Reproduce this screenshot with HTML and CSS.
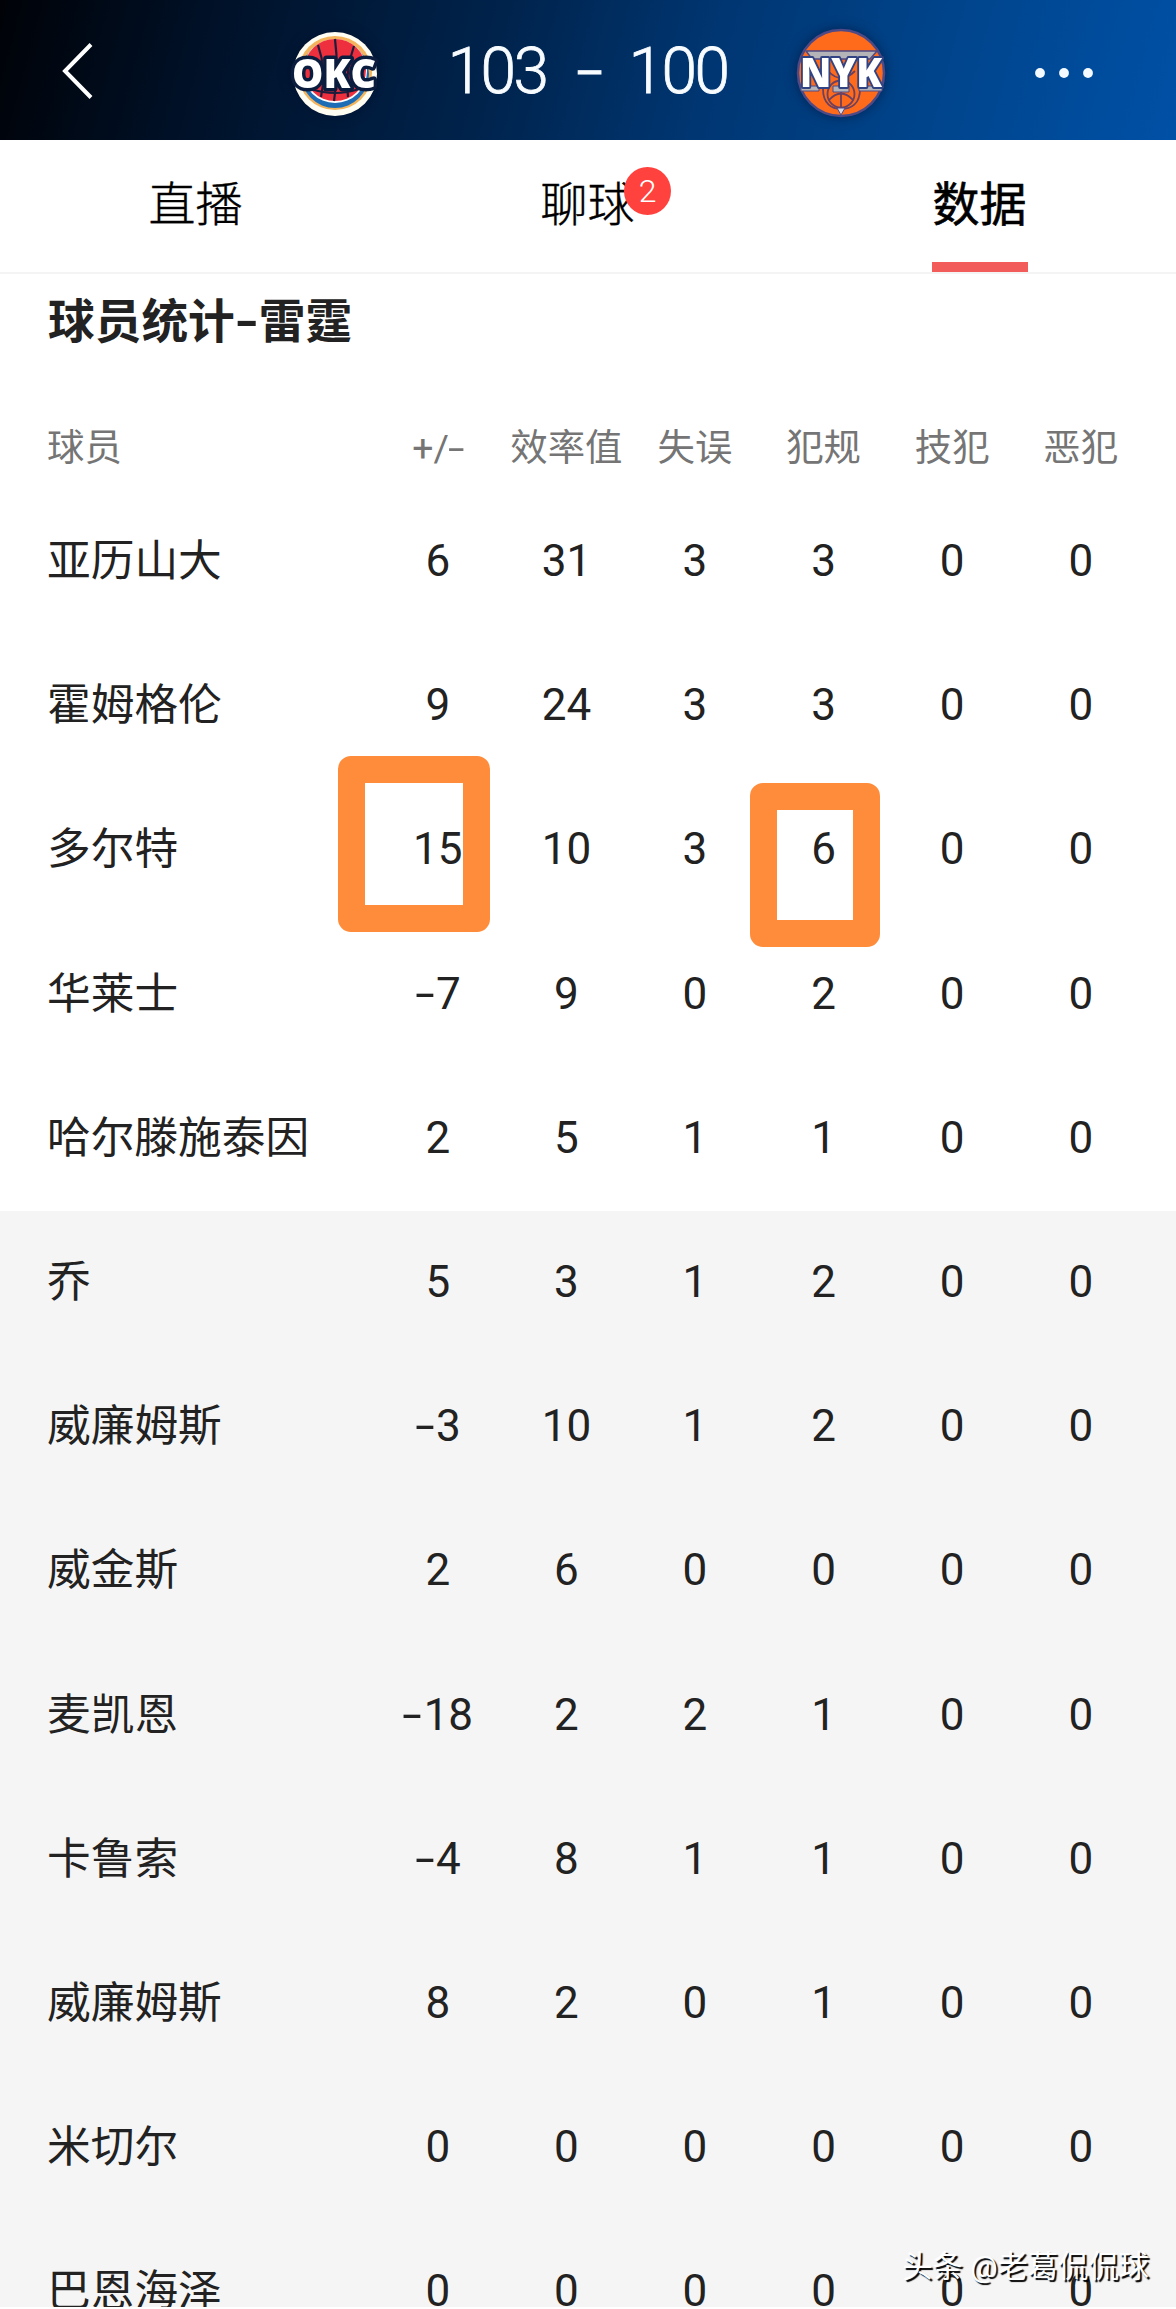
FILE: index.html
```html
<!DOCTYPE html>
<html lang="zh-CN">
<head>
    <meta charset="UTF-8">
    <meta name="viewport" content="width=device-width, initial-scale=1.0">
    <title>球员统计</title>
    <link rel="stylesheet" href="styles.css">
</head>
<body>
    <div class="page">
        <header class="topbar">
            <svg class="back" viewBox="0 0 34 60">
                <path d="M31 1.5 L5 28 L31 54.5" fill="none" stroke="#fff" stroke-width="4"/>
            </svg>

            <div class="match">
                <!-- OKC -->
                <svg class="logo" viewBox="0 0 92 92">
                    <circle cx="46" cy="47" r="42" fill="#fffdf2"/>
                    <circle cx="46" cy="46" r="37" fill="#f3b45c"/>
                    <circle cx="46" cy="47" r="34" fill="#1c6db5"/>
                    <circle cx="46" cy="44" r="32" fill="#fff"/>
                    <circle cx="46" cy="43" r="31" fill="#ee2f3d"/>
                    <path d="M46 12 Q50 43 45 74 M29 18 Q38 44 32 70 M65 19 Q56 44 59 70 M22 62 Q46 70 70 62" fill="none" stroke="#1b1d3c" stroke-width="2.2"/>
                    <text class="logo-text" x="45" y="61" textLength="84" lengthAdjust="spacingAndGlyphs" stroke="#0b1d3f" stroke-width="7">OKC</text>
                </svg>
                <div class="score">
                    <span>103</span>
                    <span class="dash">-</span>
                    <span>100</span>
                </div>
                <!-- NYK -->
                <svg class="logo" viewBox="0 0 92 92">
                    <circle cx="46" cy="46" r="43" fill="#ff6b1a" stroke="#4f4a86" stroke-width="2.5"/>
                    <path d="M11 24 H82 L75 32 H17 Z" fill="#b4b4b8" stroke="#4f4a86" stroke-width="1.5"/>
                    <path d="M28 62 C28 77 37 82 46 82 C56 82 65 77 65 62" fill="none" stroke="#6b4060" stroke-width="1.8"/>
                    <circle cx="46" cy="67" r="13.5" fill="none" stroke="#6b4060" stroke-width="1.8"/>
                    <path d="M46 54 V81 M34 73 Q46 60 58 73 M33 44 Q46 58 60 44" fill="none" stroke="#6b4060" stroke-width="1.8"/>
                    <path d="M6 59 H24 V64 H6 Z M38 59 H54 V65 H38 Z M64 59 H87 V64 H64 Z" fill="#b4b4b8" stroke="#4f4a86"/>
                    <path d="M42 81 H50 L46 88 Z" fill="#d8d8e4" stroke="#4f4a86"/>
                    <text class="logo-text" x="46" y="60" textLength="82" lengthAdjust="spacingAndGlyphs" stroke="#324383" stroke-width="4">NYK</text>
                </svg>
            </div>

            <svg class="more" viewBox="0 0 60 12">
                <circle cx="6" cy="6" r="4.9"/>
                <circle cx="30" cy="6" r="4.9"/>
                <circle cx="54" cy="6" r="4.9"/>
            </svg>
        </header>

        <nav class="tabs">
            <a class="tab">直播</a>
            <a class="tab">聊球<span class="badge">2</span></a>
            <a class="tab active">数据</a>
        </nav>

        <h1>球员统计<span class="title-dash">-</span>雷霆</h1>

        <table>
            <thead>
                <tr><th>球员</th><th>+/<span class="minus">-</span></th><th>效率值</th><th>失误</th><th>犯规</th><th>技犯</th><th>恶犯</th></tr>
            </thead>
            <tbody>
                <tr><th>亚历山大</th><td>6</td><td>31</td><td>3</td><td>3</td><td>0</td><td>0</td></tr>
                <tr><th>霍姆格伦</th><td>9</td><td>24</td><td>3</td><td>3</td><td>0</td><td>0</td></tr>
                <tr><th>多尔特</th><td>15<i class="mark mark-plus"></i></td><td>10</td><td>3</td><td>6<i class="mark mark-foul"></i></td><td>0</td><td>0</td></tr>
                <tr><th>华莱士</th><td><span class="minus">-</span>7</td><td>9</td><td>0</td><td>2</td><td>0</td><td>0</td></tr>
                <tr><th>哈尔滕施泰因</th><td>2</td><td>5</td><td>1</td><td>1</td><td>0</td><td>0</td></tr>
            </tbody>
            <!-- bench -->
            <tbody class="bench">
                <tr><th>乔</th><td>5</td><td>3</td><td>1</td><td>2</td><td>0</td><td>0</td></tr>
                <tr><th>威廉姆斯</th><td><span class="minus">-</span>3</td><td>10</td><td>1</td><td>2</td><td>0</td><td>0</td></tr>
                <tr><th>威金斯</th><td>2</td><td>6</td><td>0</td><td>0</td><td>0</td><td>0</td></tr>
                <tr><th>麦凯恩</th><td><span class="minus">-</span>18</td><td>2</td><td>2</td><td>1</td><td>0</td><td>0</td></tr>
                <tr><th>卡鲁索</th><td><span class="minus">-</span>4</td><td>8</td><td>1</td><td>1</td><td>0</td><td>0</td></tr>
                <tr><th>威廉姆斯</th><td>8</td><td>2</td><td>0</td><td>1</td><td>0</td><td>0</td></tr>
                <tr><th>米切尔</th><td>0</td><td>0</td><td>0</td><td>0</td><td>0</td><td>0</td></tr>
                <tr><th>巴恩海泽</th><td>0</td><td>0</td><td>0</td><td>0</td><td>0</td><td>0</td></tr>
            </tbody>
        </table>

        <div class="watermark">头条 @老葛侃侃球</div>
    </div>
</body>
</html>
```

FILE: styles.css
```css
* {
    box-sizing: border-box;
}
body {
    margin: 0;
    background: #fff;
    font-family: Roboto, "Noto Sans CJK SC", sans-serif;
    color: #222;
}
.page {
    position: relative;
    height: 2307px;
    overflow: hidden;
}
.topbar {
    display: flex;
    align-items: center;
    justify-content: space-between;
    height: 140px;
    padding: 6px 82px 0 60px;
    background: linear-gradient(105deg, #000207 0%, #001128 18%, #00234c 42%, #003672 60%, #00458d 80%, #0050a6 100%);
}
.back {
    width: 34px;
    height: 60px;
}
.match {
    display: flex;
    align-items: center;
    justify-content: space-between;
    width: 598px;
    margin-left: 47px;
}
.logo {
    width: 92px;
    height: 92px;
    overflow: visible;
    filter: drop-shadow(0 0 6px rgba(0, 10, 40, 0.5));
}
.logo-text {
    font-family: "Open Sans", sans-serif;
    font-size: 40px;
    font-weight: 800;
    fill: #fff;
    text-anchor: middle;
    paint-order: stroke;
    stroke-linejoin: round;
}
.score {
    display: flex;
    align-items: center;
    justify-content: space-between;
    width: 280px;
    font-size: 64px;
    font-weight: 300;
    line-height: 74px;
    padding-bottom: 2px;
    letter-spacing: -2.5px;
    color: #f8fcff;
    -webkit-text-stroke: 0.8px #f8fcff;
}
.dash {
    transform: scaleX(1.5);
}
.more {
    width: 60px;
    height: 12px;
    fill: #f4faff;
}
.tabs {
    display: flex;
    height: 134px;
    border-bottom: 2px solid #f4f4f4;
}
.tab {
    position: relative;
    flex: 1;
    padding-right: 1px;
    font-size: 47px;
    font-weight: 300;
    line-height: 130px;
    text-align: center;
    color: #000;
    -webkit-text-stroke: 0.4px #000;
}
.tab.active {
    font-weight: 400;
    -webkit-text-stroke: 0.6px #000;
}
.tab.active::after {
    content: "";
    position: absolute;
    left: 148px;
    bottom: 0;
    width: 96px;
    height: 10px;
    background: #f25c5a;
}
.badge {
    position: absolute;
    left: 232px;
    top: 27px;
    width: 47px;
    height: 48px;
    border-radius: 50%;
    background: #ff423d;
    color: #fff;
    font-size: 32px;
    font-weight: 300;
    line-height: 48px;
    -webkit-text-stroke: 0;
}
h1 {
    margin: 0;
    padding-left: 48px;
    height: 109px;
    font-size: 46.7px;
    font-weight: 700;
    line-height: 97px;
}
.title-dash {
    display: inline-block;
    width: 24px;
    text-align: center;
    transform: scaleX(1.4);
}
table, thead, tbody {
    display: block;
}
tr {
    display: grid;
    grid-template-columns: 326.5px repeat(6, 128.6px);
    height: 144.2px;
    padding-left: 47px;
    line-height: 143px;
}
th, td {
    position: relative;
    padding: 0;
    font-size: 44px;
    font-weight: 400;
    text-align: center;
    white-space: nowrap;
}
tbody th {
    font-size: 43.7px;
}
th:first-child {
    text-align: left;
}
thead tr {
    height: 107px;
    line-height: 130px;
}
thead th {
    font-size: 37.4px;
    color: #757575;
}
.bench {
    background: #f5f5f5;
}
.minus {
    display: inline-block;
    margin: 0 5px 0 4px;
    transform: scaleX(1.6);
}
thead .minus {
    margin: 0 2px;
}

/* highlighted cells */
.mark {
    position: absolute;
    border: 27px solid #ff8c3a;
    border-radius: 13px;
}
.mark-plus {
    left: -36px;
    top: -22px;
    width: 152px;
    height: 176px;
}
.mark-foul {
    left: -9px;
    top: 5px;
    width: 130px;
    height: 164px;
}
.watermark {
    position: absolute;
    right: 27px;
    bottom: 18px;
    font-size: 30.3px;
    line-height: 44px;
    color: #fff;
    text-shadow: 2px 2px 1px #000;
}
```
